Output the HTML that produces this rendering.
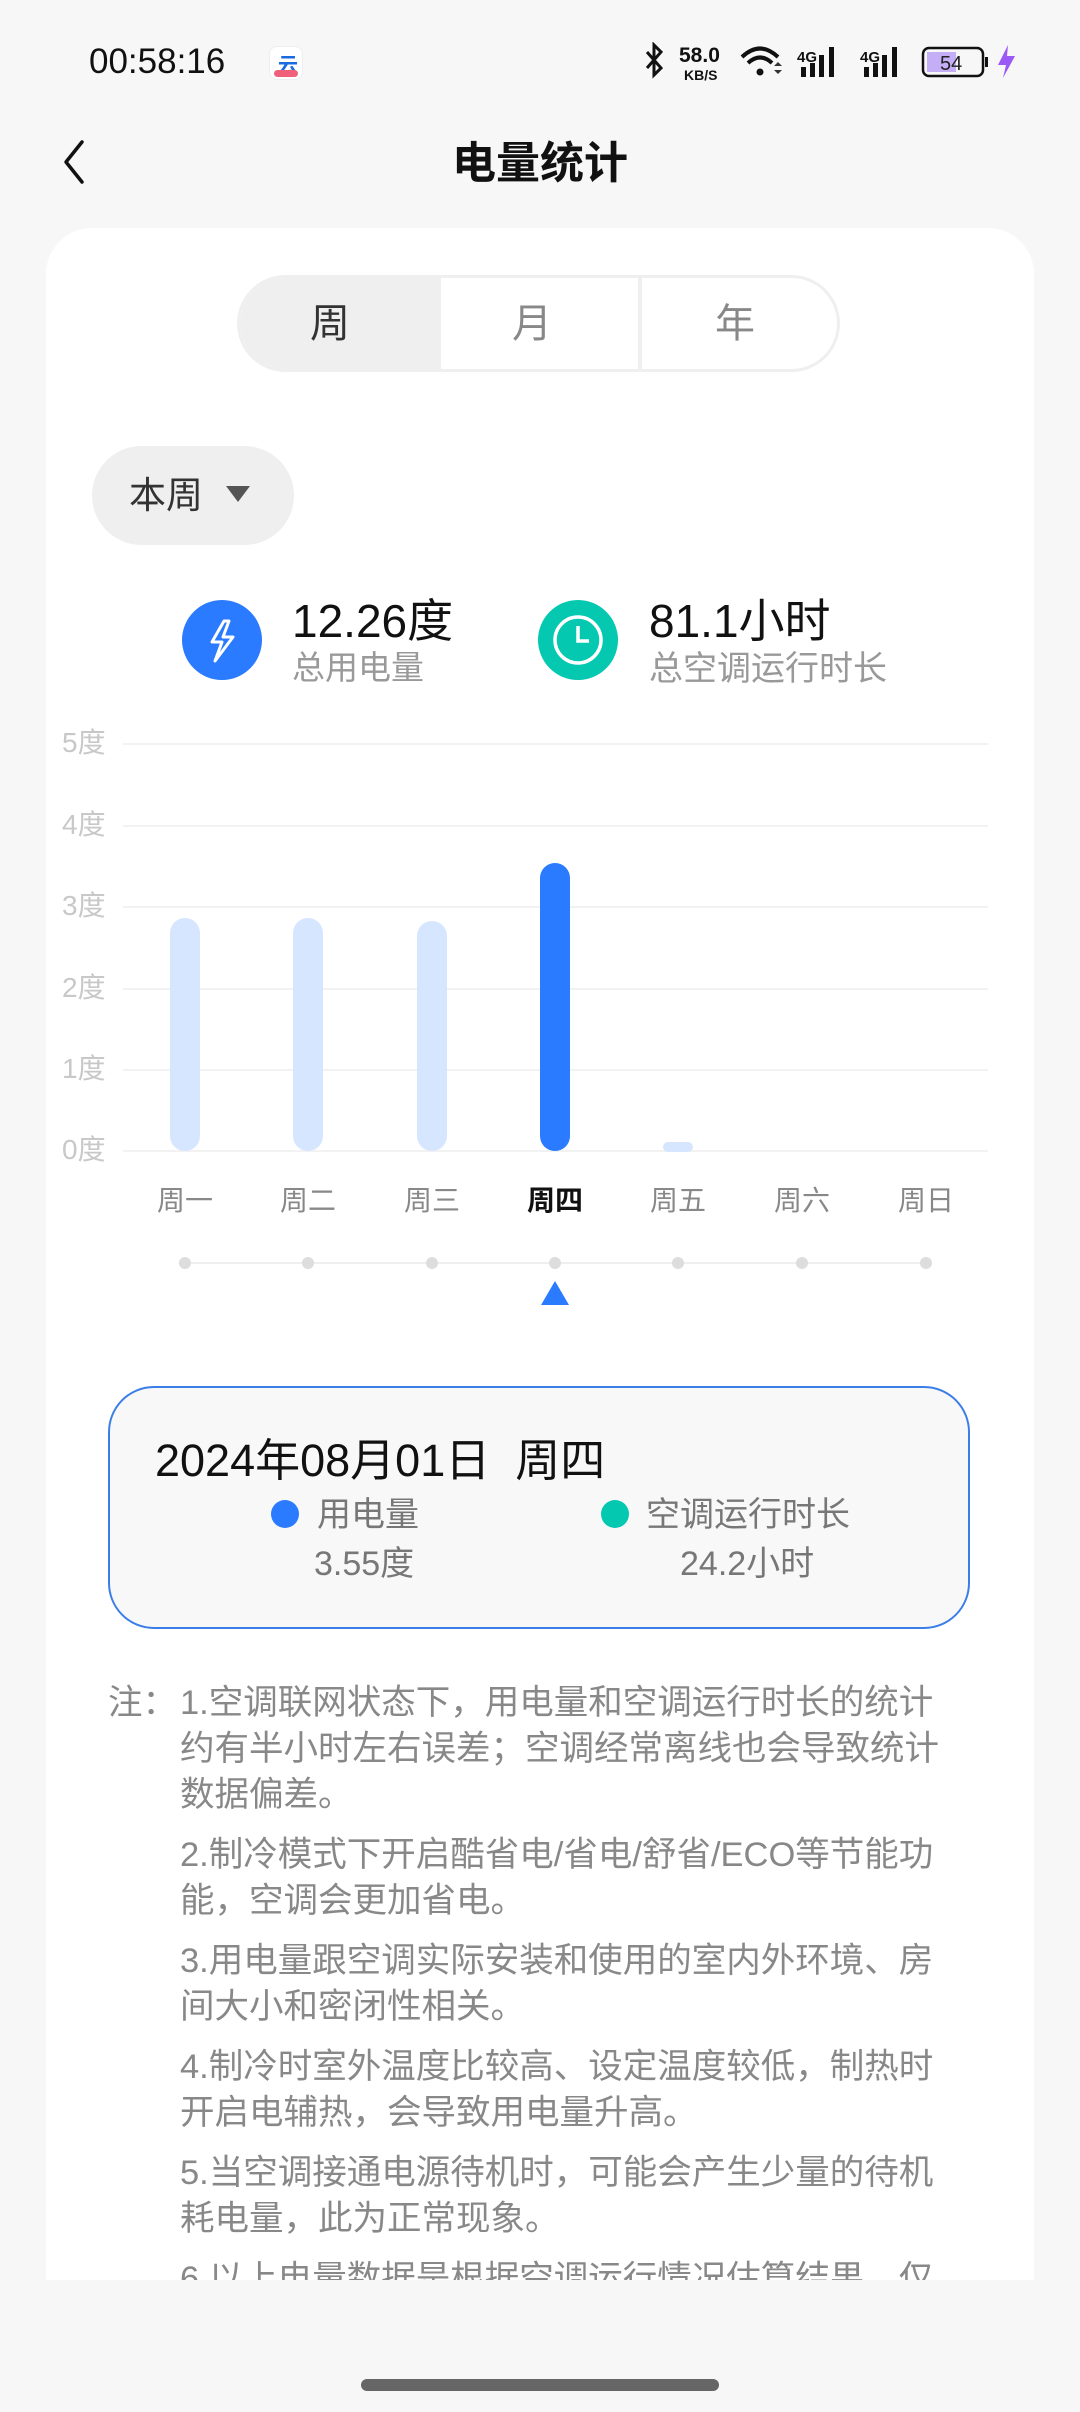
<!DOCTYPE html>
<html><head><meta charset="utf-8"><style>
*{margin:0;padding:0;box-sizing:border-box}
body{width:1080px;height:2412px;background:#f7f7f7;font-family:"Liberation Sans","Noto Sans CJK SC",sans-serif;position:relative;overflow:hidden}
.a{position:absolute;white-space:nowrap}
.card{position:absolute;left:46px;top:228px;width:988px;height:2052px;background:#fff;border-radius:46px 46px 0 0;overflow:hidden}
.grid{position:absolute;left:77px;width:865px;height:2px;background:#f2f2f2}
.yl{position:absolute;left:16px;font-size:28px;color:#c8c8c8;line-height:28px}
.bar{position:absolute;width:30px;border-radius:15px;background:#d6e6ff}
.dl{position:absolute;top:951px;font-size:28px;color:#888;width:100px;text-align:center;margin-left:-50px}
.dot{position:absolute;top:1029px;width:12px;height:12px;border-radius:6px;background:#ddd;margin-left:-6px}
.notes{position:absolute;left:62px;top:1452px;font-size:34.5px;line-height:46px;color:#888}
.notes p{padding-left:72px;width:855px;margin-bottom:14px;white-space:normal}
</style></head><body>
<div class="a" style="left:89px;top:42px;font-size:35px;color:#111">00:58:16</div>
<div class="a" style="left:269px;top:46px;width:34px;height:34px;border-radius:8px;background:#fff;border:1px solid #eee"><div style="position:absolute;left:8px;top:2px;color:#1a6be0;font-size:20px;font-weight:bold">云</div><div style="position:absolute;left:4px;bottom:2px;width:24px;height:7px;border-radius:4px;background:#f0607a"></div></div>
<svg class="a" style="left:640px;top:42px" width="390" height="42" viewBox="640 42 390 42">
<path d="M647 52 L661 68 L654 75 L654 45 L661 52 L647 68" fill="none" stroke="#111" stroke-width="3"/>
<text x="679" y="62" font-size="21" font-weight="bold" fill="#111" font-family="Liberation Sans">58.0</text>
<text x="684" y="80" font-size="14" fill="#111" font-family="Liberation Sans" font-weight="bold">KB/S</text>
<path d="M742 57 Q760 40 778 57" fill="none" stroke="#111" stroke-width="4"/>
<path d="M748 63 Q760 52 772 63" fill="none" stroke="#111" stroke-width="4"/>
<circle cx="760" cy="72" r="3.5" fill="#111"/>
<path d="M774 66 l4 -4 l4 4z M774 70 l4 4 l4 -4z" fill="#333"/>
<text x="797" y="62" font-size="15" font-weight="bold" fill="#111" font-family="Liberation Sans">4G</text>
<rect x="801" y="67" width="5" height="10" fill="#111"/><rect x="810" y="63" width="5" height="14" fill="#111"/><rect x="819" y="55" width="5" height="22" fill="#111"/><rect x="829" y="47" width="5" height="30" fill="#111"/>
<text x="860" y="62" font-size="15" font-weight="bold" fill="#111" font-family="Liberation Sans">4G</text>
<rect x="864" y="67" width="5" height="10" fill="#111"/><rect x="873" y="63" width="5" height="14" fill="#111"/><rect x="882" y="55" width="5" height="22" fill="#111"/><rect x="892" y="47" width="5" height="30" fill="#111"/>
<rect x="923" y="48" width="60" height="28" rx="6" fill="none" stroke="#111" stroke-width="2.5"/>
<rect x="927" y="52" width="29" height="20" fill="#c4aef5"/>
<rect x="985" y="57" width="3" height="10" fill="#111"/>
<text x="940" y="70" font-size="20" fill="#222" font-family="Liberation Sans">54</text>
<path d="M1008 45 L998 65 L1006 65 L1003 78 L1015 56 L1007 56 Z" fill="#9b59f5"/>
</svg>
<svg class="a" style="left:58px;top:138px" width="30" height="50"><path d="M24 4 L8 24 L24 44" fill="none" stroke="#111" stroke-width="3.5" stroke-linecap="round" stroke-linejoin="round"/></svg>
<div class="a" style="left:0;width:1080px;text-align:center;top:127px;font-size:44px;font-weight:bold;color:#111">电量统计</div>

<div class="card">
 <div class="a" style="left:191px;top:47px;width:603px;height:97px;border:3px solid #efefef;border-radius:49px;overflow:hidden;background:#fff">
  <div class="a" style="left:0;top:0;width:201px;height:97px;background:#efefef"></div>
  <div class="a" style="left:398px;top:0;width:4px;height:97px;background:#efefef"></div>
  <div class="a" style="left:70px;top:13px;font-size:40px;color:#333">周</div>
  <div class="a" style="left:272px;top:13px;font-size:40px;color:#888">月</div>
  <div class="a" style="left:475px;top:13px;font-size:40px;color:#888">年</div>
 </div>
 <div class="a" style="left:46px;top:218px;width:202px;height:99px;border-radius:50px;background:#efefef"></div>
 <div class="a" style="left:83px;top:237px;font-size:37px;color:#333">本周</div>
 <svg class="a" style="left:179px;top:256px" width="26" height="20"><path d="M1 2 L25 2 L13 18Z" fill="#555"/></svg>

 <div class="a" style="left:136px;top:372px;width:80px;height:80px;border-radius:40px;background:#2a7bff"></div>
 <svg class="a" style="left:156px;top:390px" width="40" height="46"><path d="M22 3 L10 24 L20 24 L13 43 L31 19 L21 19 L27 3Z" fill="none" stroke="#fff" stroke-width="3" stroke-linejoin="round"/></svg>
 <div class="a" style="left:246px;top:357px;font-size:46px;color:#111">12.26度</div>
 <div class="a" style="left:246px;top:413px;font-size:33px;color:#999">总用电量</div>
 <div class="a" style="left:492px;top:372px;width:80px;height:80px;border-radius:40px;background:#04c8b0"></div>
 <svg class="a" style="left:492px;top:372px" width="80" height="80"><circle cx="40" cy="40" r="23" fill="none" stroke="#fff" stroke-width="3.5"/><path d="M40 26 V41 H51" fill="none" stroke="#fff" stroke-width="3.5"/></svg>
 <div class="a" style="left:603px;top:357px;font-size:46px;color:#111">81.1小时</div>
 <div class="a" style="left:603px;top:413px;font-size:34px;color:#999">总空调运行时长</div>

 <div class="grid" style="top:515px"></div><div class="grid" style="top:597px"></div><div class="grid" style="top:678px"></div><div class="grid" style="top:760px"></div><div class="grid" style="top:841px"></div><div class="grid" style="top:922px"></div>
 <div class="yl" style="top:501px">5度</div><div class="yl" style="top:583px">4度</div><div class="yl" style="top:664px">3度</div><div class="yl" style="top:746px">2度</div><div class="yl" style="top:827px">1度</div><div class="yl" style="top:908px">0度</div>
 <div class="bar" style="left:124px;top:690px;height:233px"></div>
 <div class="bar" style="left:247px;top:690px;height:233px"></div>
 <div class="bar" style="left:371px;top:693px;height:230px"></div>
 <div class="bar" style="left:494px;top:635px;height:288px;background:#2a7bff"></div>
 <div class="bar" style="left:617px;top:914px;height:10px;border-radius:5px"></div>
 <div class="dl" style="left:139px">周一</div><div class="dl" style="left:262px">周二</div><div class="dl" style="left:386px">周三</div><div class="dl" style="left:509px;color:#111;font-weight:bold">周四</div><div class="dl" style="left:632px">周五</div><div class="dl" style="left:756px">周六</div><div class="dl" style="left:880px">周日</div>
 <div class="a" style="left:139px;top:1034px;width:741px;height:2px;background:#efefef"></div>
 <div class="dot" style="left:139px"></div><div class="dot" style="left:262px"></div><div class="dot" style="left:386px"></div><div class="dot" style="left:509px"></div><div class="dot" style="left:632px"></div><div class="dot" style="left:756px"></div><div class="dot" style="left:880px"></div>
 <svg class="a" style="left:495px;top:1053px" width="28" height="24"><path d="M14 0 L28 24 L0 24Z" fill="#2a7bff"/></svg>

 <div class="a" style="left:62px;top:1158px;width:862px;height:243px;border:2.5px solid #3b7ee8;border-radius:46px;background:#f8f8f8"></div>
 <div class="a" style="left:109px;top:1196px;font-size:45px;color:#111">2024年08月01日&nbsp; 周四</div>
 <div class="a" style="left:225px;top:1272px;width:28px;height:28px;border-radius:14px;background:#2a7bff"></div>
 <div class="a" style="left:271px;top:1259px;font-size:34px;color:#777">用电量</div>
 <div class="a" style="left:268px;top:1308px;font-size:34px;color:#777">3.55度</div>
 <div class="a" style="left:555px;top:1272px;width:28px;height:28px;border-radius:14px;background:#04c8b0"></div>
 <div class="a" style="left:600px;top:1259px;font-size:34px;color:#777">空调运行时长</div>
 <div class="a" style="left:634px;top:1308px;font-size:34px;color:#777">24.2小时</div>

 <div class="notes">
  <div class="a" style="left:0;top:0">注：</div>
  <p>1.空调联网状态下，用电量和空调运行时长的统计<br>约有半小时左右误差；空调经常离线也会导致统计<br>数据偏差。</p>
  <p>2.制冷模式下开启酷省电/省电/舒省/ECO等节能功<br>能，空调会更加省电。</p>
  <p>3.用电量跟空调实际安装和使用的室内外环境、房<br>间大小和密闭性相关。</p>
  <p>4.制冷时室外温度比较高、设定温度较低，制热时<br>开启电辅热，会导致用电量升高。</p>
  <p>5.当空调接通电源待机时，可能会产生少量的待机<br>耗电量，此为正常现象。</p>
  <p>6.以上电量数据是根据空调运行情况估算结果，仅<br>供参考。</p>
 </div>
</div>
<div class="a" style="left:361px;top:2379px;width:358px;height:12px;border-radius:6px;background:#666"></div>
</body></html>
